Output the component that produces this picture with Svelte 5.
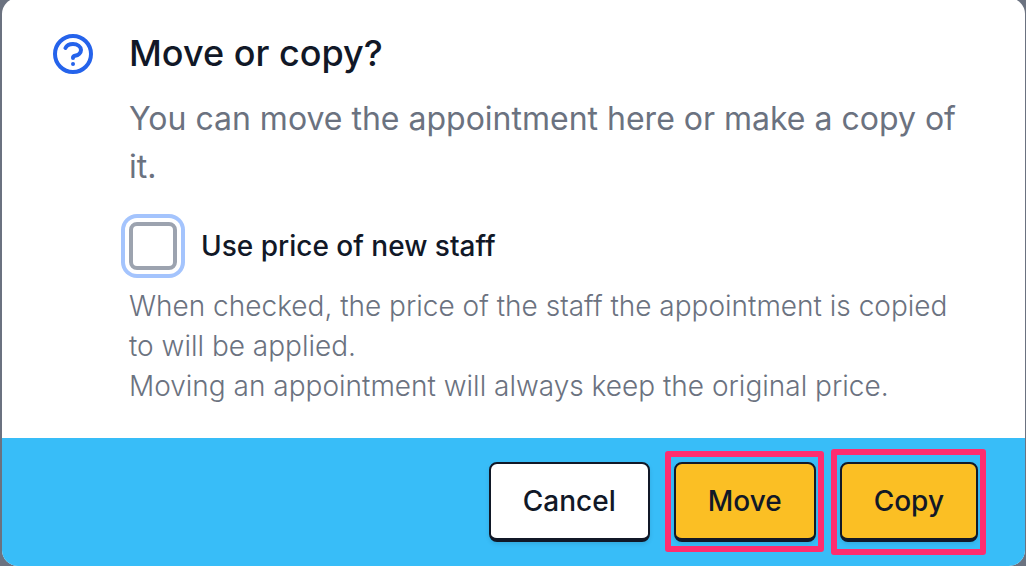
<script lang="ts">
  let usePrice = $state(false);
</script>

<main class="backdrop">
  <div class="dialog" role="dialog" aria-modal="true" aria-labelledby="dialog-title">
    <div class="body">
      <svg class="icon" viewBox="0 0 24 24" fill="none" aria-hidden="true">
        <path
          d="M8.228 9c.549-1.165 2.03-2 3.772-2 2.21 0 4 1.343 4 3 0 1.4-1.278 2.575-3.006 2.907-.542.104-.994.54-.994 1.093m0 3h.01M21 12a9 9 0 11-18 0 9 9 0 0118 0z"
          stroke="currentColor"
          stroke-width="2"
          stroke-linecap="round"
          stroke-linejoin="round"
        />
      </svg>

      <div class="content">
        <h1 id="dialog-title">Move or copy?</h1>
        <p class="lead">You can move the appointment here or make a copy of it.</p>

        <div class="option">
          <input id="use-price" type="checkbox" aria-describedby="price-help" bind:checked={usePrice} />
          <label for="use-price">Use price of new staff</label>
        </div>
        <p class="help" id="price-help">
          When checked, the price of the staff the appointment is copied to will be applied.<br />
          Moving an appointment will always keep the original price.
        </p>
      </div>
    </div>

    <div class="footer">
      <button type="button">Cancel</button>
      <div class="marked">
        <button type="button" class="primary">Move</button>
      </div>
      <div class="marked tall">
        <button type="button" class="primary">Copy</button>
      </div>
    </div>
  </div>
</main>

<style>
  :global(body) {
    background: #6b7280;
    overflow: hidden;
  }

  .backdrop {
    padding: 0 1px 0 2px;
    font-family: Inter, "Liberation Sans", sans-serif;
    color: #111827;
  }

  .dialog {
    margin-top: -2px;
    background: #fff;
    border-radius: 16px;
    overflow: hidden;
  }

  /* Body */
  .body {
    display: flex;
    align-items: flex-start;
    gap: 32px;
    padding: 32px 47px;
  }

  .icon {
    flex-shrink: 0;
    width: 48px;
    height: 48px;
    color: #2563eb;
  }

  .content { flex: 1; }

  h1, p { margin: 0; }

  h1 {
    font-size: 36px;
    font-weight: 500;
    line-height: 46px;
  }

  .lead {
    margin-top: 19px;
    font-size: 32px;
    line-height: 48px;
    color: #6b7280;
  }

  .option {
    display: flex;
    align-items: center;
    gap: 24px;
    margin-top: 31px;
  }

  .option input {
    appearance: none;
    width: 48px;
    height: 48px;
    margin: 0;
    border: 4px solid #9ca3af;
    border-radius: 8px;
    background: #fff;
    box-shadow: 0 0 0 4px #fff, 0 0 0 8px #a4c4fd;
  }

  .option input:checked { background: #2563eb; }

  .option label {
    font-size: 28px;
    font-weight: 500;
    line-height: 40px;
  }

  .help {
    margin-top: 16px;
    font-size: 28px;
    font-weight: 300;
    line-height: 40px;
    color: #6b7280;
  }

  /* Footer */
  .footer {
    display: flex;
    justify-content: flex-end;
    gap: 24px;
    padding: 24px 47px;
    background: #38bdf8;
  }

  button {
    padding: 17px 32px;
    border: 2px solid #111827;
    border-bottom-width: 4px;
    border-radius: 8px;
    background: #fff;
    box-shadow: 0 2px 4px rgb(0 0 0 / 10%);
    color: #111827;
    font-family: inherit;
    font-size: 28px;
    font-weight: 500;
    line-height: 40px;
  }

  .primary { background: #fbbf24; }

  .marked { position: relative; }

  .marked::after {
    content: "";
    position: absolute;
    inset: -11px -8px -10px -9px;
    border: 6px solid #ff2d6f;
    border-radius: 3px;
    pointer-events: none;
  }

  .tall::after { inset: -13px -8px -13px -9px; }
</style>
